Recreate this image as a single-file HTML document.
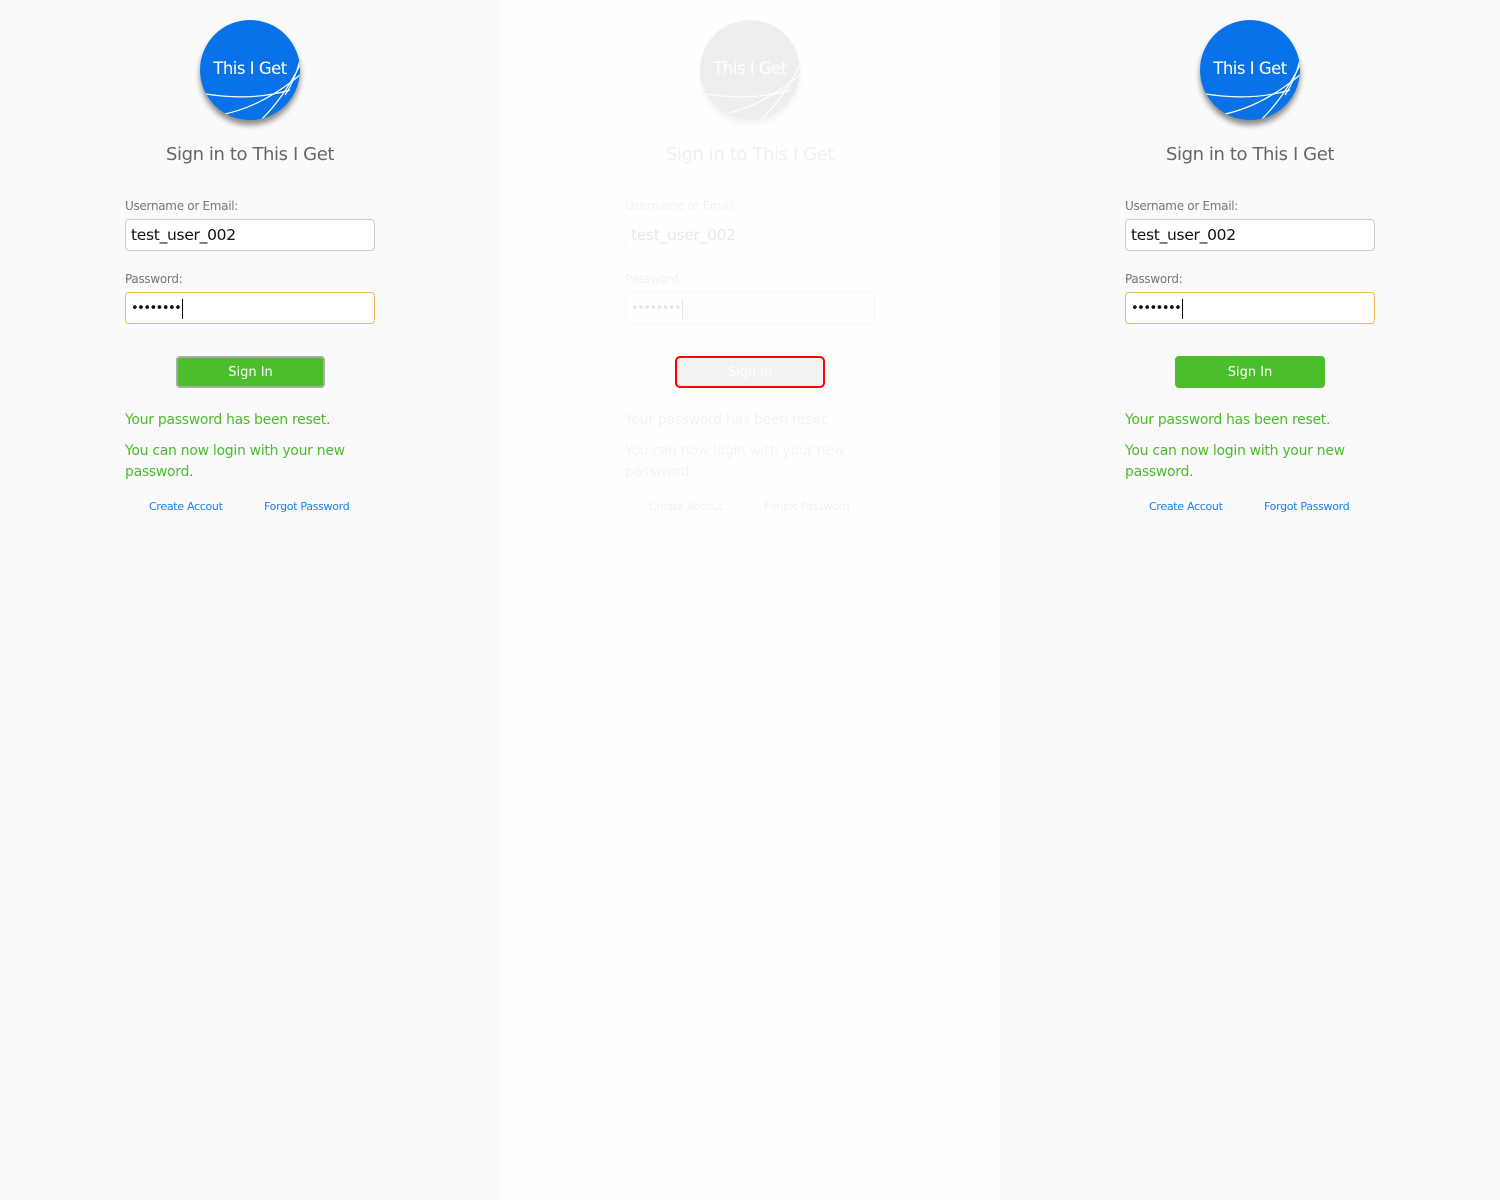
<!DOCTYPE html>
<html><head><meta charset="utf-8"><style>
*{margin:0;padding:0;box-sizing:border-box}
body{width:1500px;height:1200px;background:#fafafa;font-family:"DejaVu Sans","Liberation Sans",sans-serif;position:relative;overflow:hidden}
.p{position:absolute;top:0;width:500px;height:1200px;background:#fafafa}
.p>*{position:absolute}
.logo{left:200px;top:20px;width:100px;height:100px;border-radius:50%;background:#0a72e8;box-shadow:0 5px 6px rgba(0,0,0,.45);overflow:hidden}
.logo span{position:absolute;left:0;width:100px;top:39px;text-align:center;color:#fff;font-size:16.5px;letter-spacing:-.5px}
.logo svg{position:absolute;left:0;top:0}
.t{left:0;width:500px;top:144px;text-align:center;font-size:18px;color:#666;letter-spacing:-.4px}
.l{left:125px;font-size:12px;color:#777;letter-spacing:-.3px}
.i{left:125px;width:250px;height:32px;background:#fff;border:1px solid #ccc;border-radius:4px;padding-left:5px;font-size:15.5px;line-height:31px;color:#111;letter-spacing:-.3px}
.pw{border-color:#eeb95a;font-size:13px;letter-spacing:-1.5px}
.pw b{display:inline-block;width:1px;height:20px;background:#000;vertical-align:middle;margin-left:2px}
.btn{left:176px;top:356px;width:149px;height:32px;background:#4cbd2c;border:2px solid #aaa;border-radius:4px;color:#fff;text-align:center;font-size:13px;line-height:29px}
.m{left:125px;width:250px;color:#4cbb2c;font-size:14px;line-height:21px;letter-spacing:-.3px}
.a{top:500px;font-size:11px;color:#1a80e8;letter-spacing:-.3px}
</style></head><body>

<div class="p" style="left:0">
<div class="logo"><svg width="100" height="100"><g fill="none" stroke="#fff" stroke-width="1.2"><path d="M0 73 Q50 82 90 70"/><path d="M20 95 Q60 88 100 55"/><path d="M50 110 Q80 85 100 45"/><path d="M85 75 Q95 60 100 40"/></g></svg><span>This I Get</span></div>
<div class="t">Sign in to This I Get</div>
<div class="l" style="top:199px">Username or Email:</div>
<div class="i" style="top:219px">test_user_002</div>
<div class="l" style="top:272px">Password:</div>
<div class="i pw" style="top:292px">••••••••<b></b></div>
<div class="btn">Sign In</div>
<div class="m" style="top:410px">Your password has been reset.</div>
<div class="m" style="top:441px">You can now login with your new password.</div>
<div class="a" style="left:149px">Create Accout</div>
<div class="a" style="left:264px">Forgot Password</div>
</div>

<div class="p" style="left:500px;background:#fefefe">
<div style="left:0;top:0;width:500px;height:1200px;opacity:.09">
<div class="logo" style="position:absolute;background:#555"><svg width="100" height="100"><g fill="none" stroke="#fff" stroke-width="1.2"><path d="M0 73 Q50 82 90 70"/><path d="M20 95 Q60 88 100 55"/><path d="M50 110 Q80 85 100 45"/></g></svg><span>This I Get</span></div>
<div class="t" style="position:absolute">Sign in to This I Get</div>
<div class="l" style="position:absolute;top:199px">Username or Email:</div>
<div class="i" style="position:absolute;top:219px">test_user_002</div>
<div class="l" style="position:absolute;top:272px">Password:</div>
<div class="i pw" style="position:absolute;top:292px">••••••••<b></b></div>
<div class="m" style="position:absolute;top:410px">Your password has been reset.</div>
<div class="m" style="position:absolute;top:441px">You can now login with your new password.</div>
<div class="a" style="position:absolute;left:149px">Create Accout</div>
<div class="a" style="position:absolute;left:264px">Forgot Password</div>
</div>
<div class="btn" style="background:#f2f2f2;border:2px solid #f00;border-radius:5px;left:175px;width:150px;color:#fff">Sign In</div>
</div>

<div class="p" style="left:1000px">
<div class="logo"><svg width="100" height="100"><g fill="none" stroke="#fff" stroke-width="1.2"><path d="M0 73 Q50 82 90 70"/><path d="M20 95 Q60 88 100 55"/><path d="M50 110 Q80 85 100 45"/><path d="M85 75 Q95 60 100 40"/></g></svg><span>This I Get</span></div>
<div class="t">Sign in to This I Get</div>
<div class="l" style="top:199px">Username or Email:</div>
<div class="i" style="top:219px">test_user_002</div>
<div class="l" style="top:272px">Password:</div>
<div class="i pw" style="top:292px">••••••••<b></b></div>
<div class="btn" style="left:175px;width:150px;border:none;line-height:33px">Sign In</div>
<div class="m" style="top:410px">Your password has been reset.</div>
<div class="m" style="top:441px">You can now login with your new password.</div>
<div class="a" style="left:149px">Create Accout</div>
<div class="a" style="left:264px">Forgot Password</div>
</div>
</body></html>
